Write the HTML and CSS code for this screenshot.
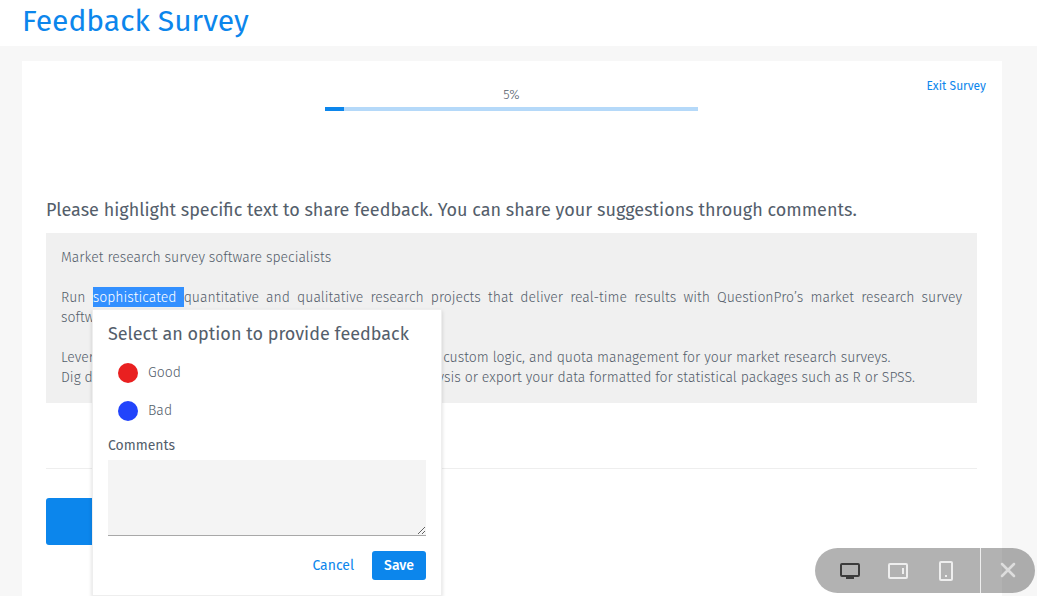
FILE: index.html
```html
<!DOCTYPE html>
<html lang="en">
<head>
  <meta charset="UTF-8" />
  <meta name="viewport" content="width=device-width, initial-scale=1.0"/>
  <title>Feedback Survey</title>
  <link rel="stylesheet" href="styles.css">
</head>
<body>
  <header class="page-header">
    <h1>Feedback Survey</h1>
  </header>

  <main class="survey">
    <div class="survey-top">
      <div class="progress">
        <span class="progress-label">5%</span>
        <div class="progress-track">
          <div class="progress-fill" style="width: 5%"></div>
        </div>
      </div>
      <a class="exit-link" href="#">Exit Survey</a>
    </div>

    <section class="question">
      <h2>Please highlight specific text to share feedback. You can share your suggestions through comments.</h2>

      <div class="highlight-box">
        <p>Market research survey software specialists</p>
        <p>Run <mark>sophisticated </mark>quantitative and qualitative research projects that deliver real-time results with QuestionPro’s market research survey software.</p>
        <p>Leverage advanced question types, skip rules, branching and custom logic, and quota management for your market research surveys.<br>
        Dig deeper into the data with our built-in tools for data analysis or export your data formatted for statistical packages such as R or SPSS.</p>

        <!-- Feedback popup -->
        <form class="popup">
          <h3>Select an option to provide feedback</h3>
          <label class="option">
            <input type="radio" name="feedback" class="dot dot-good">
            Good
          </label>
          <label class="option">
            <input type="radio" name="feedback" class="dot dot-bad">
            Bad
          </label>
          <label class="comments-label" for="comments">Comments</label>
          <textarea id="comments"></textarea>
          <div class="popup-actions">
            <button type="button" class="btn-cancel">Cancel</button>
            <button type="button" class="btn-save">Save</button>
          </div>
        </form>
      </div>
    </section>

    <footer class="survey-footer">
      <button type="button" class="btn-next">Next</button>
    </footer>
  </main>

  <!-- Device preview switcher -->
  <div class="device-bar">
    <div class="devices">
      <button type="button" class="active" aria-label="Desktop">
        <svg width="20" height="16" viewBox="0 0 20 16">
          <rect x="1" y="1" width="18" height="12" rx="1" fill="none" stroke="currentColor" stroke-width="2"/>
          <rect x="6" y="13" width="8" height="3" fill="currentColor"/>
        </svg>
      </button>
      <button type="button" aria-label="Tablet">
        <svg width="20" height="16" viewBox="0 0 20 16">
          <rect x="1" y="1" width="18" height="14" rx="1" fill="none" stroke="currentColor" stroke-width="2"/>
          <rect x="14" y="5" width="2" height="6" fill="currentColor"/>
        </svg>
      </button>
      <button type="button" aria-label="Phone">
        <svg width="14" height="20" viewBox="0 0 14 20">
          <rect x="1" y="1" width="12" height="18" rx="1" fill="none" stroke="currentColor" stroke-width="2"/>
          <rect x="6" y="14" width="2" height="2" fill="currentColor"/>
        </svg>
      </button>
    </div>
    <button type="button" class="close" aria-label="Close">
      <svg width="16" height="16" viewBox="0 0 16 16">
        <path d="M2 2L14 14M14 2L2 14" fill="none" stroke="currentColor" stroke-width="2.5" stroke-linecap="round"/>
      </svg>
    </button>
  </div>
</body>
</html>
```
FILE: styles.css
```css
* {
  box-sizing: border-box;
}

body {
  margin: 0;
  min-height: 100vh;
  display: flex;
  flex-direction: column;
  background-color: #f7f7f7;
  color: #545e6b;
  font-family: 'Fira Sans', 'Noto Sans', sans-serif;
  font-size: 14px;
  line-height: 20px;
}

button,
textarea {
  font: inherit;
}

button {
  border: none;
  cursor: pointer;
}

.page-header {
  background-color: white;
  padding: 0 22px 4px;
}

.page-header h1 {
  margin: 0;
  color: #0c86ec;
  font-size: 30px;
  font-weight: 400;
  line-height: 42px;
}

.survey {
  flex: 1;
  margin: 15px 35px 0 22px;
  padding: 0 25px 0 24px;
  background-color: white;
}

.survey-top {
  display: grid;
  grid-template-columns: 1fr 373px 1fr;
  margin-right: -9px;
  margin-left: -9px;
  padding-top: 15px;
}

.progress {
  grid-column: 2;
  padding-top: 9px;
}

.progress-label {
  display: block;
  margin-bottom: 2px;
  font-size: 13px;
  font-weight: 300;
  text-align: center;
}

.progress-track {
  height: 4px;
  background-color: #b5d9f9;
}

.progress-fill {
  height: 100%;
  background-color: #0c86ec;
}

.exit-link {
  justify-self: end;
  color: #0c86ec;
  font-size: 12px;
  text-decoration: none;
}

.question h2 {
  margin: 87px 0 11px;
  font-size: 18px;
  font-weight: 400;
  line-height: 24px;
}

.highlight-box {
  position: relative;
  padding: 15px;
  background-color: #f0f0f0;
  font-weight: 300;
  text-align: justify;
}

.highlight-box p {
  margin: 0 0 20px;
}

.highlight-box p:last-of-type {
  margin-bottom: 0;
}

.highlight-box mark {
  padding: 2px 0 1px;
  background-color: #3390ff;
  color: white;
}

.popup {
  position: absolute;
  top: 76px;
  left: 46px;
  z-index: 1;
  width: 350px;
  padding: 12px 15px 15px;
  border: 1px solid #eee;
  background-color: white;
  box-shadow: 0 2px 4px rgba(0, 0, 0, 0.15);
  text-align: left;
}

.popup h3 {
  margin: 0 0 17px;
  font-size: 18px;
  font-weight: 400;
  line-height: 24px;
}

.option {
  display: flex;
  align-items: center;
  gap: 10px;
  margin: 0 0 18px 10px;
}

.dot {
  appearance: none;
  width: 20px;
  height: 20px;
  margin: 0;
  border-radius: 50%;
}

.dot-good {
  background-color: #e92020;
}

.dot-bad {
  background-color: #2244fb;
}

.comments-label {
  display: block;
  margin: -3px 0 4px;
  font-weight: 400;
}

.popup textarea {
  display: block;
  width: 100%;
  height: 76px;
  border: none;
  border-bottom: 1px solid #a8a8a8;
  background-color: #f4f4f4;
  resize: both;
}

.popup-actions {
  display: flex;
  justify-content: flex-end;
  gap: 6px;
  margin-top: 15px;
}

.popup-actions button {
  padding: 5px 12px 4px;
  border-radius: 3px;
  font-weight: 400;
}

.btn-cancel {
  background: none;
  color: #0c86ec;
}

.popup-actions .btn-save {
  background-color: #0c86ec;
  color: white;
  font-weight: 500;
}

.survey-footer {
  margin-top: 65px;
  padding-top: 29px;
  border-top: 1px solid #eee;
}

.btn-next {
  width: 160px;
  height: 47px;
  border-radius: 3px;
  background-color: #0c86ec;
  color: white;
}

.device-bar {
  position: fixed;
  right: 2px;
  bottom: 3px;
  display: flex;
  height: 45px;
  border-radius: 23px;
  background-color: rgba(0, 0, 0, 0.3);
}

.devices {
  display: flex;
  align-items: center;
  padding: 0 10px 0 11px;
  border-right: 1px solid #eee;
}

.device-bar button {
  display: flex;
  align-items: center;
  justify-content: center;
  width: 48px;
  height: 44px;
  padding: 0;
  background: none;
  color: #eee;
}

.device-bar .active {
  color: #3c3c3c;
}

.device-bar .close {
  width: 54px;
  color: #ddd;
}
```
